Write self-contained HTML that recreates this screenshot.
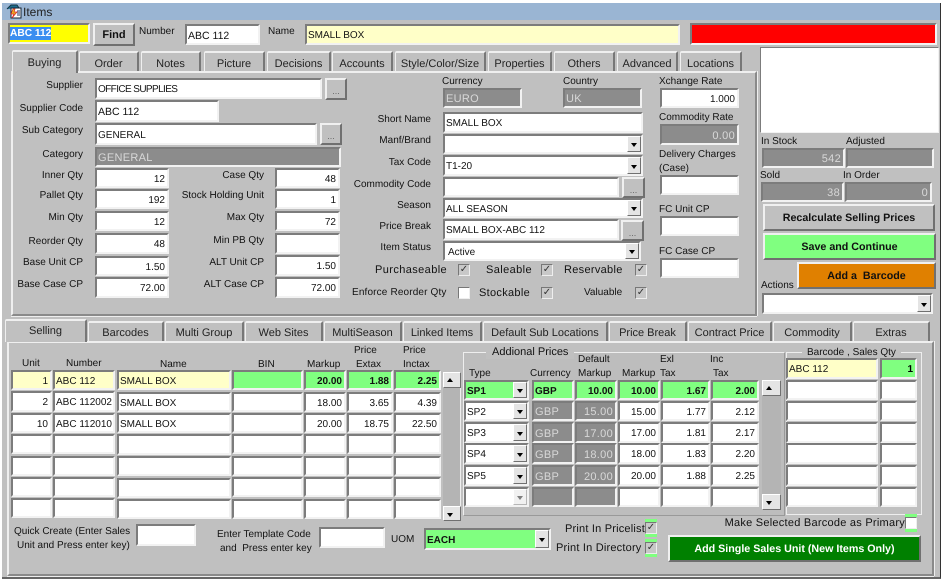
<!DOCTYPE html>
<html><head><meta charset="utf-8"><title>Items</title>
<style>
html,body{margin:0;padding:0;background:#fff}
#w{position:relative;width:947px;height:584px;overflow:hidden;background:#fff;font:10px "Liberation Sans",Arial,sans-serif;color:#111;filter:blur(.3px);text-rendering:geometricPrecision}
#w div,#w i{position:absolute;box-sizing:border-box;white-space:nowrap}
.l{height:14px;line-height:14px;margin-top:1px}
.f{display:flex;align-items:center;background:#fff;border:2px solid;border-color:#7c7c7c #f2f2f2 #f2f2f2 #7c7c7c;padding:2px 1px 0;overflow:hidden;color:#111}
.r{justify-content:flex-end;padding-right:2px}
.g{background:#8c8c8c;color:#d8d8d8;font-size:11px;letter-spacing:.3px}
.y{background:#ffffc8}.n{background:#80ff80;font-weight:bold}
.b{display:flex;align-items:center;justify-content:center;background:#c0c0c0;border:2px solid;border-color:#f0f0f0 #707070 #707070 #f0f0f0;font-weight:bold;font-size:10.7px}
.d{background:#c0c0c0;border:2px solid;border-color:#f0f0f0 #707070 #707070 #f0f0f0;color:#666;text-align:center;line-height:22px;font-size:9px}
.a{right:0;top:0;bottom:0;width:14px;background:#e4e4e4;border:1px solid;border-color:#fff #707070 #707070 #fff}
.a:after{content:"";position:absolute;left:3px;top:50%;margin-top:-1px;border:3.5px solid transparent;border-top:4px solid #000;border-bottom:0}
.u:after{border-top:0;border-bottom:4px solid #000;margin-top:-2px}
.t{background:#c0c0c0;border:1px solid;border-color:#efefef #777 #c0c0c0 #efefef;text-align:center;font-size:11px;line-height:20px;color:#222;border-radius:2px 2px 0 0;border-width:2px 2px 0 1px}
.t1{line-height:22px}
.p{background:#c0c0c0;border:2px solid;border-color:#efefef #8a8a8a #8a8a8a #efefef;box-shadow:1px 0 0 #eee,0 1px 0 #eee}
.c{width:12px;height:12px;background:#c8c8c8;border:1px solid;border-color:#777 #eee #eee #777;color:#333;font-size:10px;line-height:10px;text-align:center}
.m{font-size:11px}
</style></head><body><div id="w">
<div style="left:2px;top:3px;width:939px;height:576px;background:#c0c0c0;border-right:1px solid #333;border-bottom:2px solid #666"></div>
<div style="left:2px;top:3px;width:938px;height:17px;background:#9ab5d3"></div>
<svg style="position:absolute;left:6px;top:4px" width="16" height="15" viewBox="0 0 16 15"><path d="M1 5l4-4 6 0 2 3" fill="#1c6c8c" stroke="#134"/><rect x="5" y="4" width="10" height="10" fill="#fff" stroke="#123"/><path d="M7 5l-2 5h3l-2 4 5-6H8l1-3z" fill="#e8c020" stroke="#d22" stroke-width=".7"/><path d="M11 7h3M11 9h3M11 11h3" stroke="#236"/></svg>
<div class="l" style="left:23px;top:4px;font-size:12px;color:#222">Items</div>

<div class="f" style="left:8px;top:23px;width:82px;height:21px;background:#ff0;font-weight:bold;color:#fff;font-size:10.2px;padding:0"><span style="background:#3a8ef0;padding:1px 0">ABC 112</span></div>
<div class="b" style="left:93px;top:23px;width:42px;height:23px;font-size:11px">Find</div>
<div class="l" style="left:139px;top:24px">Number</div>
<div class="f m" style="left:185px;top:24px;width:75px;height:21px;font-size:10.5px">ABC 112</div>
<div class="l" style="left:268px;top:24px">Name</div>
<div class="f y" style="left:305px;top:24px;width:375px;height:21px">SMALL BOX</div>
<div class="f" style="left:690px;top:23px;width:247px;height:22px;background:#f00"></div>

<div class="p" style="left:11px;top:71px;width:746px;height:245px"></div>
<div class="t t1" style="left:79px;top:51px;width:60px;height:20px">Order</div>
<div class="t t1" style="left:141px;top:51px;width:60px;height:20px">Notes</div>
<div class="t t1" style="left:204px;top:51px;width:61px;height:20px">Picture</div>
<div class="t t1" style="left:267px;top:51px;width:64px;height:20px">Decisions</div>
<div class="t t1" style="left:332px;top:51px;width:61px;height:20px">Accounts</div>
<div class="t t1" style="left:395px;top:51px;width:91px;height:20px">Style/Color/Size</div>
<div class="t t1" style="left:488px;top:51px;width:64px;height:20px">Properties</div>
<div class="t t1" style="left:554px;top:51px;width:61px;height:20px">Others</div>
<div class="t t1" style="left:617px;top:51px;width:61px;height:20px">Advanced</div>
<div class="t t1" style="left:680px;top:51px;width:62px;height:20px">Locations</div>
<div class="t t1" style="left:12px;top:50px;width:66px;height:23px">Buying</div>

<div class="l" style="right:864px;top:78px">Supplier</div>
<div class="l" style="right:864px;top:101px">Supplier Code</div>
<div class="l" style="right:864px;top:123px">Sub Category</div>
<div class="l" style="right:864px;top:147px">Category</div>
<div class="l" style="right:864px;top:168px">Inner Qty</div>
<div class="l" style="right:864px;top:188px">Pallet Qty</div>
<div class="l" style="right:864px;top:210px">Min Qty</div>
<div class="l" style="right:864px;top:234px">Reorder Qty</div>
<div class="l" style="right:864px;top:255px">Base Unit CP</div>
<div class="l" style="right:864px;top:277px">Base Case CP</div>
<div class="f" style="left:95px;top:78px;width:227px;height:21px;letter-spacing:-.6px">OFFICE SUPPLIES</div>
<div class="d" style="left:325px;top:78px;width:22px;height:22px">...</div>
<div class="f" style="left:95px;top:100px;width:124px;height:22px;font-size:10.5px">ABC 112</div>
<div class="f" style="left:95px;top:123px;width:222px;height:22px">GENERAL</div>
<div class="d" style="left:320px;top:123px;width:22px;height:22px">...</div>
<div class="f g" style="left:95px;top:147px;width:246px;height:20px">GENERAL</div>
<div class="f r" style="left:95px;top:168px;width:74px;height:20px">12</div>
<div class="f r" style="left:95px;top:189px;width:74px;height:20px">192</div>
<div class="f r" style="left:95px;top:211px;width:74px;height:20px">12</div>
<div class="f r" style="left:95px;top:233px;width:74px;height:21px">48</div>
<div class="f r" style="left:95px;top:256px;width:74px;height:20px">1.50</div>
<div class="f r" style="left:95px;top:277px;width:74px;height:21px">72.00</div>
<div class="l" style="right:683px;top:168px">Case Qty</div>
<div class="l" style="right:683px;top:188px">Stock Holding Unit</div>
<div class="l" style="right:683px;top:210px">Max Qty</div>
<div class="l" style="right:683px;top:233px">Min PB Qty</div>
<div class="l" style="right:683px;top:255px">ALT Unit CP</div>
<div class="l" style="right:683px;top:277px">ALT Case CP</div>
<div class="f r" style="left:275px;top:168px;width:65px;height:20px">48</div>
<div class="f r" style="left:275px;top:189px;width:65px;height:20px">1</div>
<div class="f r" style="left:275px;top:211px;width:65px;height:20px">72</div>
<div class="f r" style="left:275px;top:233px;width:65px;height:21px"></div>
<div class="f r" style="left:275px;top:255px;width:65px;height:21px">1.50</div>
<div class="f r" style="left:275px;top:277px;width:65px;height:21px">72.00</div>

<div class="l" style="left:442px;top:74px">Currency</div>
<div class="l" style="left:563px;top:74px">Country</div>
<div class="f g" style="left:443px;top:88px;width:79px;height:20px">EURO</div>
<div class="f g" style="left:563px;top:88px;width:79px;height:20px">UK</div>
<div class="l" style="right:516px;top:112px">Short Name</div>
<div class="l" style="right:516px;top:133px">Manf/Brand</div>
<div class="l" style="right:516px;top:155px">Tax Code</div>
<div class="l" style="right:516px;top:177px">Commodity Code</div>
<div class="l" style="right:516px;top:198px">Season</div>
<div class="l" style="right:516px;top:219px">Price Break</div>
<div class="l" style="right:516px;top:240px">Item Status</div>
<div class="f" style="left:443px;top:112px;width:200px;height:21px">SMALL BOX</div>
<div class="f" style="left:443px;top:134px;width:200px;height:20px"><i class="a"></i></div>
<div class="f" style="left:443px;top:155px;width:200px;height:21px">T1-20<i class="a"></i></div>
<div class="f" style="left:443px;top:177px;width:176px;height:20px"></div>
<div class="d" style="left:622px;top:177px;width:23px;height:21px">...</div>
<div class="f" style="left:443px;top:198px;width:200px;height:20px">ALL SEASON<i class="a"></i></div>
<div class="f" style="left:443px;top:219px;width:176px;height:21px">SMALL BOX-ABC 112</div>
<div class="d" style="left:621px;top:220px;width:23px;height:21px">...</div>
<div class="f" style="left:443px;top:241px;width:198px;height:20px;padding-left:3px">Active<i class="a"></i></div>
<div class="l m" style="left:375px;top:262px;letter-spacing:.4px">Purchaseable</div>
<div class="c" style="left:458px;top:264px">✓</div>
<div class="l m" style="left:486px;top:262px;letter-spacing:.4px">Saleable</div>
<div class="c" style="left:541px;top:264px">✓</div>
<div class="l m" style="left:564px;top:262px;letter-spacing:.3px">Reservable</div>
<div class="c" style="left:635px;top:264px">✓</div>
<div class="l" style="left:352px;top:285px;letter-spacing:.15px">Enforce Reorder Qty</div>
<div class="c" style="left:458px;top:287px;background:#fff"></div>
<div class="l m" style="left:479px;top:285px;letter-spacing:.3px">Stockable</div>
<div class="c" style="left:541px;top:287px">✓</div>
<div class="l" style="left:584px;top:285px">Valuable</div>
<div class="c" style="left:635px;top:287px">✓</div>

<div class="l" style="left:659px;top:74px">Xchange Rate</div>
<div class="f r" style="left:660px;top:88px;width:79px;height:20px">1.000</div>
<div class="l" style="left:659px;top:110px">Commodity Rate</div>
<div class="f r g" style="left:660px;top:124px;width:79px;height:21px">0.00</div>
<div class="l" style="left:659px;top:147px">Delivery Charges</div>
<div class="l" style="left:659px;top:161px">(Case)</div>
<div class="f" style="left:660px;top:175px;width:79px;height:20px"></div>
<div class="l" style="left:659px;top:202px">FC Unit CP</div>
<div class="f" style="left:660px;top:216px;width:79px;height:20px"></div>
<div class="l" style="left:659px;top:244px">FC Case CP</div>
<div class="f" style="left:660px;top:258px;width:79px;height:20px"></div>

<div class="f" style="left:760px;top:47px;width:179px;height:86px;border-width:1px"></div>
<div class="l" style="left:761px;top:134px">In Stock</div>
<div class="l" style="left:846px;top:134px">Adjusted</div>
<div class="f r g" style="left:762px;top:148px;width:83px;height:20px">542</div>
<div class="f g" style="left:846px;top:148px;width:88px;height:20px"></div>
<div class="l" style="left:760px;top:168px">Sold</div>
<div class="l" style="left:843px;top:168px">In Order</div>
<div class="f r g" style="left:761px;top:182px;width:83px;height:20px">38</div>
<div class="f r g" style="left:845px;top:182px;width:87px;height:20px">0</div>
<div class="b" style="left:763px;top:204px;width:172px;height:27px">Recalculate Selling Prices</div>
<div class="b" style="left:763px;top:233px;width:173px;height:27px;background:#80ff80">Save and Continue</div>
<div class="b" style="left:797px;top:262px;width:139px;height:27px;background:#e08000">Add a&nbsp; Barcode</div>
<div class="l" style="left:761px;top:278px">Actions</div>
<div class="f" style="left:762px;top:293px;width:171px;height:21px"><i class="a"></i></div>

<div class="p" style="left:7px;top:341px;width:927px;height:235px"></div>
<div class="t" style="left:88px;top:321px;width:76px;height:20px">Barcodes</div>
<div class="t" style="left:165px;top:321px;width:79px;height:20px">Multi Group</div>
<div class="t" style="left:245px;top:321px;width:78px;height:20px">Web Sites</div>
<div class="t" style="left:324px;top:321px;width:78px;height:20px">MultiSeason</div>
<div class="t" style="left:403px;top:321px;width:79px;height:20px">Linked Items</div>
<div class="t" style="left:483px;top:321px;width:125px;height:20px">Default Sub Locations</div>
<div class="t" style="left:609px;top:321px;width:78px;height:20px">Price Break</div>
<div class="t" style="left:688px;top:321px;width:84px;height:20px">Contract Price</div>
<div class="t" style="left:773px;top:321px;width:79px;height:20px">Commodity</div>
<div class="t" style="left:853px;top:321px;width:77px;height:20px">Extras</div>
<div class="t" style="left:5px;top:319px;width:82px;height:23px">Selling</div>

<div class="l" style="left:22px;top:356px">Unit</div>
<div class="l" style="left:66px;top:356px">Number</div>
<div class="l" style="left:160px;top:357px">Name</div>
<div class="l" style="left:258px;top:357px">BIN</div>
<div class="l" style="left:307px;top:357px">Markup</div>
<div class="l" style="left:354px;top:343px">Price</div>
<div class="l" style="left:356px;top:357px">Extax</div>
<div class="l" style="left:403px;top:343px">Price</div>
<div class="l" style="left:403px;top:357px">Inctax</div>

<div class="f r y" style="left:11px;top:370px;width:41px;height:20px">1</div>
<div class="f y" style="left:53px;top:370px;width:62px;height:20px">ABC 112</div>
<div class="f y" style="left:117px;top:370px;width:114px;height:20px">SMALL BOX</div>
<div class="f n" style="left:232px;top:370px;width:71px;height:20px"></div>
<div class="f r n" style="left:304px;top:370px;width:42px;height:20px">20.00</div>
<div class="f r n" style="left:347px;top:370px;width:46px;height:20px">1.88</div>
<div class="f r n" style="left:394px;top:370px;width:47px;height:20px">2.25</div>

<div class="f r" style="left:11px;top:391px;width:41px;height:21px">2</div>
<div class="f" style="left:53px;top:391px;width:62px;height:21px">ABC 112002</div>
<div class="f" style="left:117px;top:392px;width:114px;height:20px">SMALL BOX</div>
<div class="f" style="left:232px;top:392px;width:71px;height:20px"></div>
<div class="f r" style="left:304px;top:392px;width:42px;height:20px">18.00</div>
<div class="f r" style="left:347px;top:392px;width:46px;height:20px">3.65</div>
<div class="f r" style="left:394px;top:392px;width:47px;height:20px">4.39</div>

<div class="f r" style="left:11px;top:413px;width:41px;height:20px">10</div>
<div class="f" style="left:53px;top:413px;width:62px;height:20px">ABC 112010</div>
<div class="f" style="left:117px;top:413px;width:114px;height:20px">SMALL BOX</div>
<div class="f" style="left:232px;top:413px;width:71px;height:20px"></div>
<div class="f r" style="left:304px;top:413px;width:42px;height:20px">20.00</div>
<div class="f r" style="left:347px;top:413px;width:46px;height:20px">18.75</div>
<div class="f r" style="left:394px;top:413px;width:47px;height:20px">22.50</div>

<div class="f" style="left:11px;top:434px;width:41px;height:20px"></div><div class="f" style="left:53px;top:434px;width:62px;height:20px"></div><div class="f" style="left:117px;top:434px;width:114px;height:21px"></div><div class="f" style="left:232px;top:434px;width:71px;height:20px"></div><div class="f" style="left:304px;top:434px;width:42px;height:20px"></div><div class="f" style="left:347px;top:434px;width:46px;height:20px"></div><div class="f" style="left:394px;top:434px;width:47px;height:20px"></div>
<div class="f" style="left:11px;top:456px;width:41px;height:20px"></div><div class="f" style="left:53px;top:456px;width:62px;height:20px"></div><div class="f" style="left:117px;top:456px;width:114px;height:20px"></div><div class="f" style="left:232px;top:456px;width:71px;height:20px"></div><div class="f" style="left:304px;top:456px;width:42px;height:20px"></div><div class="f" style="left:347px;top:456px;width:46px;height:20px"></div><div class="f" style="left:394px;top:456px;width:47px;height:20px"></div>
<div class="f" style="left:11px;top:477px;width:41px;height:20px"></div><div class="f" style="left:53px;top:477px;width:62px;height:20px"></div><div class="f" style="left:117px;top:478px;width:114px;height:20px"></div><div class="f" style="left:232px;top:477px;width:71px;height:20px"></div><div class="f" style="left:304px;top:477px;width:42px;height:20px"></div><div class="f" style="left:347px;top:477px;width:46px;height:20px"></div><div class="f" style="left:394px;top:477px;width:47px;height:20px"></div>
<div class="f" style="left:11px;top:498px;width:41px;height:20px"></div><div class="f" style="left:53px;top:498px;width:62px;height:20px"></div><div class="f" style="left:117px;top:499px;width:114px;height:20px"></div><div class="f" style="left:232px;top:499px;width:71px;height:20px"></div><div class="f" style="left:304px;top:499px;width:42px;height:20px"></div><div class="f" style="left:347px;top:499px;width:46px;height:20px"></div><div class="f" style="left:394px;top:499px;width:47px;height:20px"></div>

<div style="left:443px;top:372px;width:18px;height:149px;background:#b4b4b4;border-right:1px solid #eee"></div>
<div style="left:443px;top:372px;width:18px;height:16px"><i class="a u" style="width:18px"></i></div>
<div style="left:443px;top:506px;width:18px;height:15px"><i class="a" style="width:18px"></i></div>

<div class="l" style="left:14px;top:524px">Quick Create (Enter Sales</div>
<div class="l" style="left:17px;top:538px">Unit and Press enter key)</div>
<div class="f" style="left:136px;top:524px;width:60px;height:22px"></div>
<div class="l" style="left:217px;top:527px">Enter Template Code</div>
<div class="l" style="left:220px;top:541px">and&nbsp; Press enter key</div>
<div class="f" style="left:319px;top:527px;width:66px;height:21px"></div>
<div class="l" style="left:391px;top:532px">UOM</div>
<div class="f n" style="left:424px;top:528px;width:127px;height:22px">EACH<i class="a"></i></div>

<div style="left:463px;top:352px;width:322px;height:164px;border:1px solid #eee;border-right-color:#999;border-bottom-color:#999;background:#bdbdbd"></div>
<div class="l" style="left:486px;top:344px;background:#c0c0c0;padding:0 6px;font-size:11px">Addional Prices</div>
<div class="l" style="left:469px;top:366px">Type</div>
<div class="l" style="left:530px;top:366px">Currency</div>
<div class="l" style="left:578px;top:352px">Default</div>
<div class="l" style="left:578px;top:366px">Markup</div>
<div class="l" style="left:622px;top:366px">Markup</div>
<div class="l" style="left:660px;top:352px">Exl</div>
<div class="l" style="left:660px;top:366px">Tax</div>
<div class="l" style="left:710px;top:352px">Inc</div>
<div class="l" style="left:713px;top:366px">Tax</div>

<div class="f n" style="left:464px;top:380px;width:65px;height:20px">SP1<i class="a"></i></div>
<div class="f n" style="left:532px;top:380px;width:42px;height:20px">GBP</div>
<div class="f r n" style="left:575px;top:380px;width:42px;height:20px">10.00</div>
<div class="f r n" style="left:618px;top:380px;width:42px;height:20px">10.00</div>
<div class="f r n" style="left:661px;top:380px;width:49px;height:20px">1.67</div>
<div class="f r n" style="left:711px;top:380px;width:48px;height:20px">2.00</div>

<div class="f" style="left:464px;top:401px;width:65px;height:20px">SP2<i class="a"></i></div>
<div class="f g" style="left:532px;top:401px;width:42px;height:20px">GBP</div>
<div class="f r g" style="left:575px;top:401px;width:42px;height:20px">15.00</div>
<div class="f r" style="left:618px;top:401px;width:42px;height:20px">15.00</div>
<div class="f r" style="left:661px;top:401px;width:49px;height:20px">1.77</div>
<div class="f r" style="left:711px;top:401px;width:48px;height:20px">2.12</div>

<div class="f" style="left:464px;top:422px;width:65px;height:21px">SP3<i class="a"></i></div>
<div class="f g" style="left:532px;top:422px;width:42px;height:21px">GBP</div>
<div class="f r g" style="left:575px;top:422px;width:42px;height:21px">17.00</div>
<div class="f r" style="left:618px;top:422px;width:42px;height:21px">17.00</div>
<div class="f r" style="left:661px;top:422px;width:49px;height:21px">1.81</div>
<div class="f r" style="left:711px;top:422px;width:48px;height:21px">2.17</div>

<div class="f" style="left:464px;top:443px;width:65px;height:21px">SP4<i class="a"></i></div>
<div class="f g" style="left:532px;top:443px;width:42px;height:21px">GBP</div>
<div class="f r g" style="left:575px;top:443px;width:42px;height:21px">18.00</div>
<div class="f r" style="left:618px;top:443px;width:42px;height:21px">18.00</div>
<div class="f r" style="left:661px;top:443px;width:49px;height:21px">1.83</div>
<div class="f r" style="left:711px;top:443px;width:48px;height:21px">2.20</div>

<div class="f" style="left:464px;top:465px;width:65px;height:21px">SP5<i class="a"></i></div>
<div class="f g" style="left:532px;top:465px;width:42px;height:21px">GBP</div>
<div class="f r g" style="left:575px;top:465px;width:42px;height:21px">20.00</div>
<div class="f r" style="left:618px;top:465px;width:42px;height:21px">20.00</div>
<div class="f r" style="left:661px;top:465px;width:49px;height:21px">1.88</div>
<div class="f r" style="left:711px;top:465px;width:48px;height:21px">2.25</div>

<div class="f" style="left:464px;top:487px;width:65px;height:20px"><i class="a" style="opacity:.5"></i></div>
<div class="f g" style="left:532px;top:487px;width:42px;height:20px"></div>
<div class="f g" style="left:575px;top:487px;width:42px;height:20px"></div>
<div class="f" style="left:618px;top:487px;width:42px;height:20px"></div>
<div class="f" style="left:661px;top:487px;width:49px;height:20px"></div>
<div class="f" style="left:711px;top:487px;width:48px;height:20px"></div>

<div style="left:762px;top:380px;width:19px;height:130px;background:#b4b4b4"></div>
<div style="left:762px;top:380px;width:19px;height:16px"><i class="a u" style="width:19px"></i></div>
<div style="left:762px;top:494px;width:19px;height:16px"><i class="a" style="width:19px"></i></div>

<div style="left:786px;top:352px;width:136px;height:163px;border:1px solid #eee"></div>
<div class="l" style="left:802px;top:345px;background:#c0c0c0;padding:0 5px">Barcode , Sales Qty</div>
<div class="f y" style="left:786px;top:358px;width:92px;height:21px">ABC 112</div>
<div class="f r n" style="left:880px;top:358px;width:37px;height:21px;color:#000">1</div>
<div class="f" style="left:786px;top:380px;width:92px;height:20px"></div><div class="f" style="left:880px;top:380px;width:37px;height:20px"></div>
<div class="f" style="left:786px;top:401px;width:92px;height:20px"></div><div class="f" style="left:880px;top:401px;width:37px;height:20px"></div>
<div class="f" style="left:786px;top:422px;width:92px;height:21px"></div><div class="f" style="left:880px;top:422px;width:37px;height:21px"></div>
<div class="f" style="left:786px;top:443px;width:92px;height:21px"></div><div class="f" style="left:880px;top:443px;width:37px;height:21px"></div>
<div class="f" style="left:786px;top:465px;width:92px;height:21px"></div><div class="f" style="left:880px;top:465px;width:37px;height:21px"></div>
<div class="f" style="left:786px;top:487px;width:92px;height:20px"></div><div class="f" style="left:880px;top:487px;width:37px;height:20px"></div>

<div class="l m" style="right:42px;top:515px;letter-spacing:.25px">Make Selected Barcode as Primary</div>
<div style="left:905px;top:514px;width:12px;height:18px;background:#80ff80"></div>
<div class="c" style="left:905px;top:517px;background:#fff">&nbsp;</div>
<div class="l m" style="right:302px;top:521px;letter-spacing:.2px">Print In Pricelist</div>
<div style="left:645px;top:519px;width:12px;height:18px;background:#80ff80"></div>
<div class="c" style="left:645px;top:522px">✓</div>
<div class="l m" style="left:556px;top:540px;letter-spacing:.2px">Print In Directory</div>
<div style="left:645px;top:539px;width:12px;height:18px;background:#80ff80"></div>
<div class="c" style="left:645px;top:542px">✓</div>
<div class="b" style="left:668px;top:535px;width:253px;height:27px;background:#008000;color:#fff">Add Single Sales Unit (New Items Only)</div>
</div></body></html>
